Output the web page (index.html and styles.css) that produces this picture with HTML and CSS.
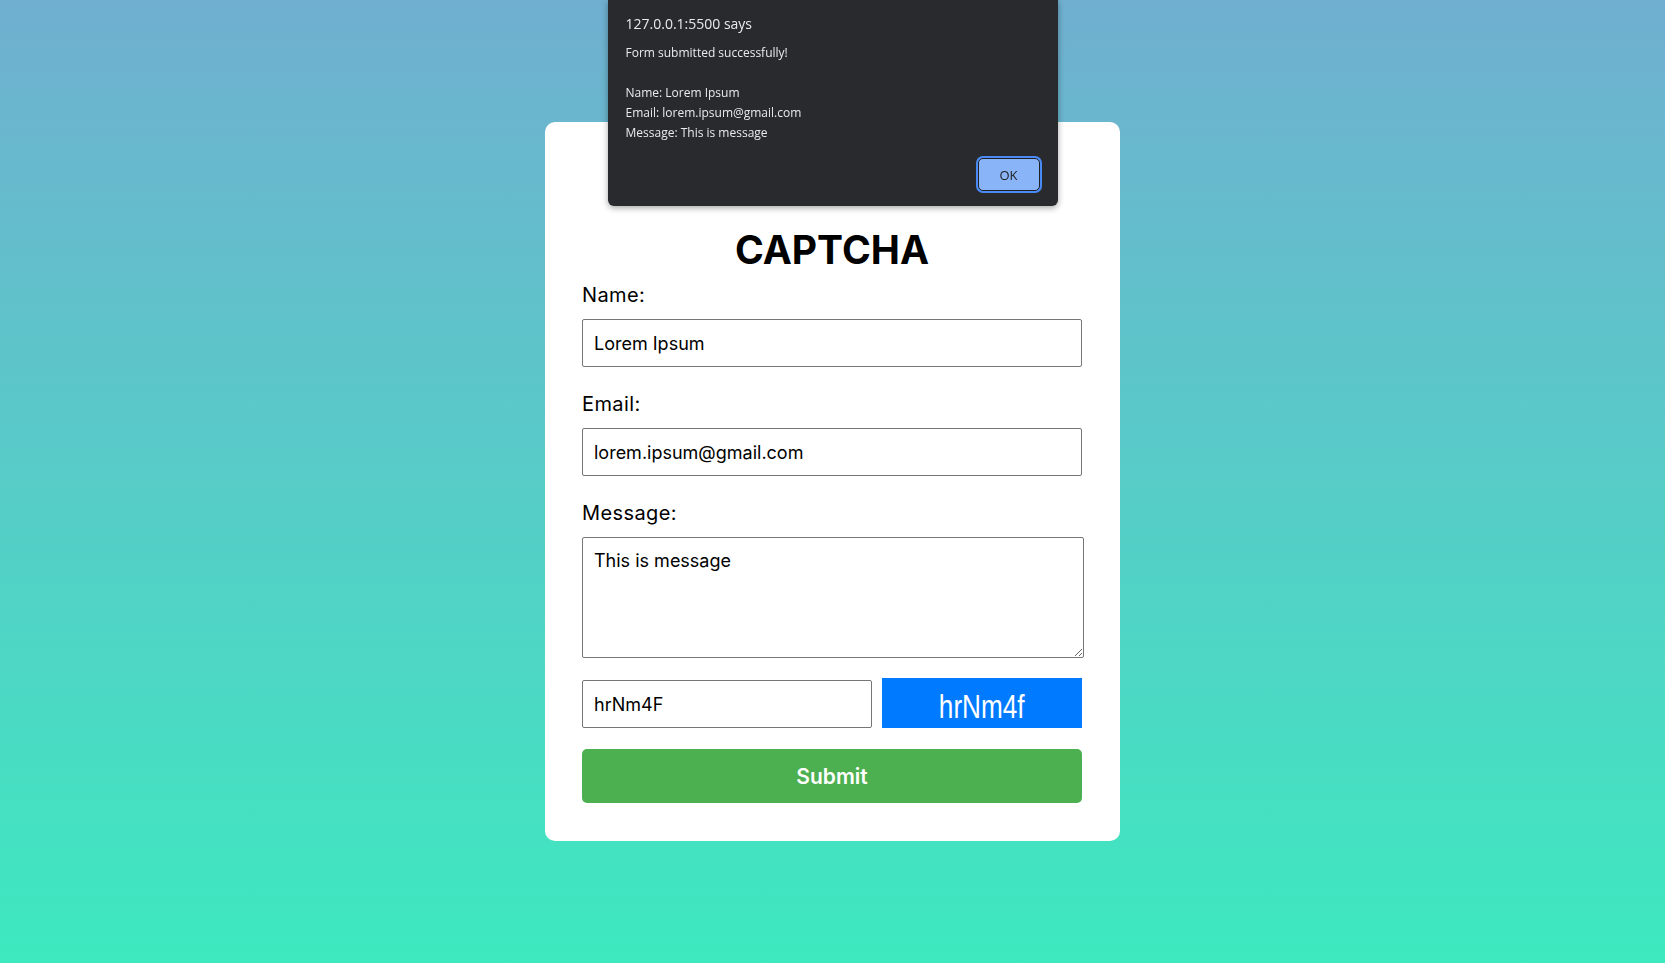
FILE: index.html
```html
<!DOCTYPE html>
<html lang="en">
<head>
    <meta charset="UTF-8">
    <meta name="viewport" content="width=device-width, initial-scale=1.0">
    <title>CAPTCHA Form</title>
    <link rel="stylesheet" href="styles.css">
</head>
<body>
    <div class="alert-box">
        <div class="alert-title">127.0.0.1:5500 says</div>
        <p class="alert-text">Form submitted successfully!

Name: Lorem Ipsum
Email: lorem.ipsum@gmail.com
Message: This is message</p>
        <div class="alert-actions">
            <button class="alert-ok">OK</button>
        </div>
    </div>

    <div class="form-container">
        <h1>CAPTCHA</h1>
        <form id="captcha-form">
            <div class="form-group">
                <label for="name">Name:</label>
                <input type="text" id="name" value="Lorem Ipsum">
            </div>
            <div class="form-group">
                <label for="email">Email:</label>
                <input type="email" id="email" value="lorem.ipsum@gmail.com">
            </div>
            <div class="form-group message-group">
                <label for="message">Message:</label>
                <textarea id="message">This is message</textarea>
            </div>
            <div class="captcha-row">
                <input type="text" id="captcha-input" value="hrNm4F">
                <div class="captcha-image"><span>hrNm4f</span></div>
            </div>
            <button type="submit" class="submit-btn">Submit</button>
        </form>
    </div>
</body>
</html>
```

FILE: styles.css
```css
body {
    margin: 0;
    height: 100vh;
    display: flex;
    align-items: center;
    justify-content: center;
    font-family: 'Inter', 'Open Sans', sans-serif;
    background: linear-gradient(to bottom, #70afd0, #3de9bf);
}

/* browser alert popup */
.alert-box {
    position: fixed;
    top: 0;
    left: 50%;
    transform: translateX(-50%);
    width: 450px;
    box-sizing: border-box;
    padding: 14px 16px 15px 18px;
    background-color: #292a2d;
    color: #e8eaed;
    border-radius: 0 0 6px 6px;
    box-shadow: 0 2px 6px rgba(0, 0, 0, 0.35);
    font-family: 'Open Sans', 'Noto Sans', sans-serif;
}
.alert-title {
    font-size: 14px;
    line-height: 20px;
}
.alert-text {
    margin: 9px 0 0;
    font-size: 12px;
    line-height: 20px;
    white-space: pre-line;
}
.alert-actions {
    display: flex;
    justify-content: flex-end;
    margin-top: 15px;
}
.alert-ok {
    width: 62px;
    height: 33px;
    box-sizing: border-box;
    background-color: #8ab4f8;
    color: #202124;
    border: 1px solid #1f2023;
    border-radius: 5px;
    box-shadow: 0 0 0 2px #4a8af4;
    font-family: 'Open Sans', sans-serif;
    font-size: 13px;
    padding: 0;
    margin-right: 2px;
}

/* form card */
.form-container {
    background-color: white;
    border-radius: 10px;
    width: 500px;
    padding: 38px 38px 38px 37px;
}
h1 {
    margin: 66px 0 9px;
    text-align: center;
    font-size: 39px;
    line-height: 48px;
    font-weight: 700;
    color: #000;
}
.form-group {
    margin-bottom: 25px;
}
.message-group {
    margin-bottom: 20px;
}
label {
    display: block;
    font-size: 20px;
    line-height: 24px;
    letter-spacing: 0.4px;
    margin-bottom: 12px;
    color: #000;
}
input,
textarea {
    display: block;
    box-sizing: border-box;
    width: 100%;
    height: 48px;
    padding: 0 11px;
    border: 1px solid #767676;
    border-radius: 2px;
    font-family: 'Inter', sans-serif;
    font-size: 18px;
    color: #000;
}
textarea {
    width: 502px;
    height: 121px;
    padding: 12px 11px;
}
.captcha-row {
    display: flex;
    align-items: flex-end;
    gap: 10px;
    margin-bottom: 21px;
}
.captcha-row input {
    flex: 1;
}
.captcha-image {
    width: 200px;
    height: 50px;
    flex-shrink: 0;
    box-sizing: border-box;
    padding-top: 7px;
    background-color: #007bff;
    color: white;
    display: flex;
    align-items: center;
    justify-content: center;
    font-family: 'Liberation Sans', Arial, sans-serif;
    font-size: 34px;
}
.captcha-image span {
    display: inline-block;
    transform: scaleX(0.77);
}
.submit-btn {
    display: block;
    width: 100%;
    height: 54px;
    background-color: #4caf50;
    color: white;
    border: none;
    border-radius: 5px;
    font-family: 'Inter', sans-serif;
    font-size: 21px;
    font-weight: 600;
    cursor: pointer;
}
```
